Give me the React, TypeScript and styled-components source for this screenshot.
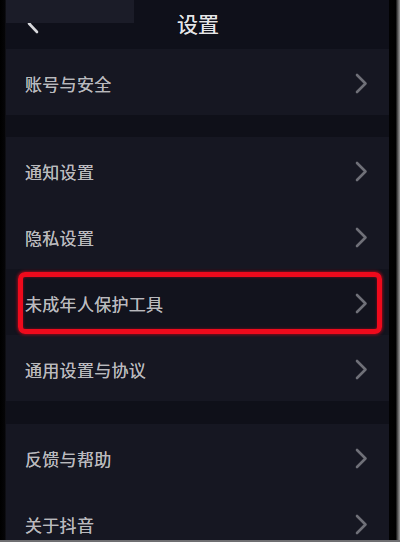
import React from "react";
import styled, { createGlobalStyle } from "styled-components";

const Global = createGlobalStyle`
  html, body { margin: 0; padding: 0; background: #000; }
  body { font-family: "Noto Sans CJK SC", "Noto Sans", sans-serif; }
`;

const Frame = styled.div`
  display: flex;
  width: 400px;
  height: 542px;
  overflow: hidden;
  background: #020203;
  position: relative;
`;

const LeftEdge = styled.div`
  width: 6px;
  flex: none;
  background: linear-gradient(90deg, #000 0%, #050507 80%, #15151c 100%);
`;

const RightEdge = styled.div`
  width: 11px;
  flex: none;
  background: linear-gradient(90deg, #020203 0%, #000 60%, #555 80%, #9a9a9a 100%);
`;

const BottomLine = styled.div`
  position: absolute;
  left: 0;
  right: 0;
  bottom: 0;
  height: 2px;
  background: #6f6f72;
`;

const Screen = styled.div`
  width: 383px;
  flex: none;
  display: flex;
  flex-direction: column;
  background: #0e0f19;
`;

const Header = styled.div`
  height: 49px;
  flex: none;
  display: flex;
  align-items: center;
  justify-content: center;
  position: relative;
  background: #0f101a;
`;

const Title = styled.div`
  color: #e4e4e6;
  font-size: 21px;
  line-height: 1;
  margin-left: 1px;
  margin-top: -2px;
  text-shadow: 0 0 0.6px #e4e4e6;
`;

const Back = styled.svg`
  position: absolute;
  left: 18px;
  top: 8px;
`;

const StatusPatch = styled.div`
  position: absolute;
  left: 0;
  top: 0;
  width: 128px;
  height: 23px;
  background: #1b1c28;
`;

const Section = styled.div<{ $bg?: string }>`
  background: #161722;
  display: flex;
  flex-direction: column;
  flex: none;
`;

const Gap = styled.div<{ $h: number }>`
  height: ${(p) => p.$h}px;
  flex: none;
  background: #0f1019;
`;

const Row = styled.div<{ $marked?: boolean }>`
  height: 66px;
  display: flex;
  align-items: center;
  justify-content: space-between;
  padding: 0 21px 0 19px;
  position: relative;
  box-sizing: border-box;
  background: ${(p) => (p.$marked ? "#12131d" : "transparent")};
`;

const Label = styled.span`
  color: #b9b9bd;
  font-size: 17px;
  letter-spacing: 0.3px;
  margin-top: 2px;
  text-shadow: 0 0 0.5px #b9b9bd;
`;

const Chevron = styled.svg`
  flex: none;
  margin-top: 2px;
`;

const Highlight = styled.div`
  position: absolute;
  left: 12px;
  right: 7px;
  top: 3px;
  bottom: 1px;
  border: 5px solid #ee0a1c;
  border-radius: 7px;
  box-shadow: 0 0 3px 1px rgba(230, 10, 30, 0.55), inset 0 0 3px rgba(230, 10, 30, 0.5);
  pointer-events: none;
`;

const Arrow = () => (
  <Chevron width="13" height="21" viewBox="0 0 13 21">
    <path d="M2 2 L10.5 10.5 L2 19" fill="none" stroke="#6f7078" strokeWidth="2.6" strokeLinecap="round" strokeLinejoin="round" />
  </Chevron>
);

type Item = { label: string; highlight?: boolean };

const ListRow = ({ label, highlight }: Item) => (
  <Row $marked={highlight}>
    <Label>{label}</Label>
    <Arrow />
    {highlight && <Highlight />}
  </Row>
);

const sections: Item[][] = [
  [{ label: "账号与安全" }],
  [
    { label: "通知设置" },
    { label: "隐私设置" },
    { label: "未成年人保护工具", highlight: true },
    { label: "通用设置与协议" },
  ],
  [{ label: "反馈与帮助" }, { label: "关于抖音" }],
];

const gaps = [22, 23];

export default function App() {
  return (
    <>
      <Global />
      <Frame>
        <LeftEdge />
        <Screen>
          <Header>
            <Back width="24" height="30" viewBox="0 0 24 30">
              <path d="M14 6 L5 15.5 L13 24" fill="none" stroke="#d8d8dc" strokeWidth="2.6" strokeLinecap="round" strokeLinejoin="round" />
            </Back>
            <StatusPatch />
            <Title>设置</Title>
          </Header>
          {sections.map((items, i) => (
            <React.Fragment key={i}>
              <Section>
                {items.map((it) => (
                  <ListRow key={it.label} {...it} />
                ))}
              </Section>
              {i < gaps.length && <Gap $h={gaps[i]} />}
            </React.Fragment>
          ))}
        </Screen>
        <RightEdge />
        <BottomLine />
      </Frame>
    </>
  );
}
